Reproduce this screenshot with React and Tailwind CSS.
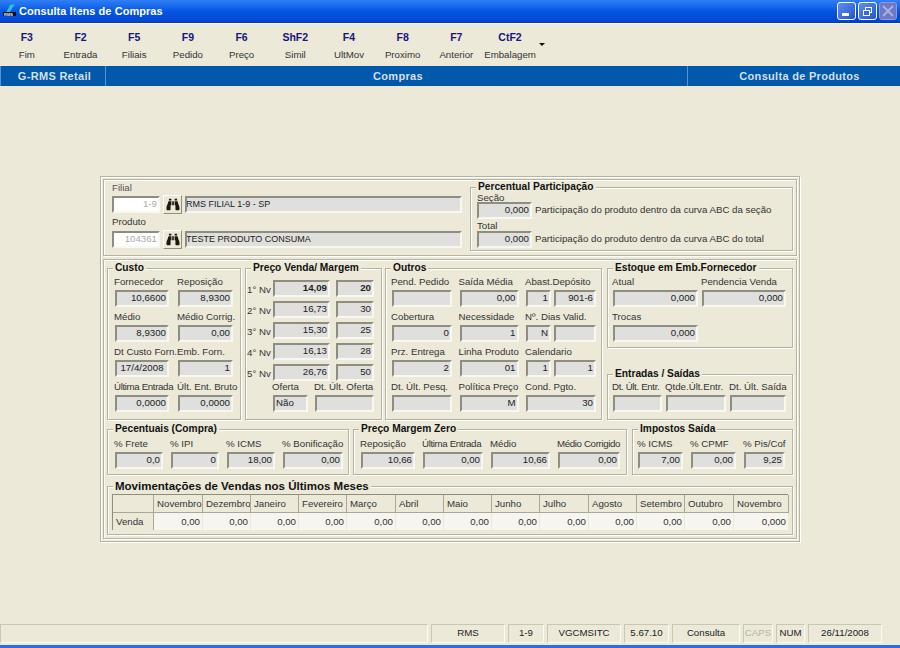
import { FaBinoculars } from 'react-icons/fa';

const tools = [
  ['F3', 'Fim'], ['F2', 'Entrada'], ['F5', 'Filiais'], ['F9', 'Pedido'], ['F6', 'Preço'],
  ['ShF2', 'Simil'], ['F4', 'UltMov'], ['F8', 'Proximo'], ['F7', 'Anterior'], ['CtF2', 'Embalagem']
];

const months = ['Novembro', 'Dezembro', 'Janeiro', 'Fevereiro', 'Março', 'Abril', 'Maio', 'Junho', 'Julho', 'Agosto', 'Setembro', 'Outubro', 'Novembro'];

const Box = ({ w = 'w-full', tone = 'bg-[#dfdfdd] text-[#222]', align = 'justify-end', children }) => (
  <div className={`${w} ${tone} ${align} h-[17px] flex items-center px-[1px] border-2 border-t-[#8f8d80] border-l-[#8f8d80] border-b-[#f8f7f2] border-r-[#f8f7f2] whitespace-nowrap overflow-hidden`}>
    {children}
  </div>
);

const Field = ({ label, w = 'w-full', align, tight, children }) => (
  <div className={w}>
    <div className={`${tight ? 'tracking-[-0.35px]' : ''} h-[16px] leading-[16px] -ml-[1px] whitespace-nowrap text-[#333]`}>{label}</div>
    <Box align={align}>{children}</Box>
  </div>
);

const Group = ({ title, className, pad, legend = 'text-[10.2px]', children }) => (
  <fieldset className={`${className} border border-[#b5b3a2] shadow-[1px_1px_0_#fff,inset_1px_1px_0_#fff]`}>
    <legend className={`${legend} ml-[5px] px-[2px] h-[12px] leading-[12px] bg-[#ece9d8] font-bold text-[#111] whitespace-nowrap`}>{title}</legend>
    <div className={pad}>{children}</div>
  </fieldset>
);

const Search = () => (
  <div className="w-[19px] h-[19px] flex items-center justify-center bg-[#ece9d8] border border-t-white border-l-white border-b-[#8f8d80] border-r-[#8f8d80]">
    <FaBinoculars className="w-[14px] h-[13px] text-[#1f170d]" />
  </div>
);

const Nivel = ({ n, price, margin, bold }) => (
  <>
    <div className="self-end h-[14px] leading-[14px] whitespace-nowrap text-[#333]">{n}° Nv</div>
    <Box><span className={bold ? 'font-bold' : ''}>{price}</span></Box>
    <Box><span className={bold ? 'font-bold' : ''}>{margin}</span></Box>
  </>
);

const Pair = ({ label, a, b }) => (
  <div>
    <div className="h-[16px] leading-[16px] text-[#333] -ml-[1px] whitespace-nowrap">{label}</div>
    <div className="flex gap-[3px]">
      <Box w="w-[25px]">{a}</Box>
      <Box w="w-[42px]">{b}</Box>
    </div>
  </div>
);

const StatusCell = ({ w, muted, children }) => (
  <div className={`${w} h-[19px] flex items-center justify-center border border-t-[#c9c6b4] border-l-[#c9c6b4] border-b-[#fbfaf5] border-r-[#fbfaf5] ${muted ? 'text-[#b5b3a8]' : 'text-[#222]'}`}>
    {children}
  </div>
);

const App = () => {
  return (
    <div className="w-[900px] h-[648px] flex flex-col bg-[#ece9d8] text-[9.7px] overflow-hidden" style={{ fontFamily: '"Liberation Sans", Arial, sans-serif' }}>
      {/* Title bar */}
      <div className="h-[23px] flex items-center bg-gradient-to-b from-[#2f7ff5] via-[#0457e4] to-[#0343cf] border-b border-[#0a3ca8]">
        <svg width="16" height="14" viewBox="0 0 16 14" className="ml-[2px]">
          <path d="M8 1 L13 0 L7 9 L4 9 Z" fill="#27c3d8" />
          <rect x="1" y="8" width="13" height="4" fill="#0b1020" />
          <text x="2" y="11.5" fontSize="4" fontWeight="bold" fill="#e8f0ff">RMS</text>
        </svg>
        <div className="ml-[1px] pt-[1px] text-white text-[11px] font-bold tracking-[0.05px]">Consulta Itens de Compras</div>
        <div className="ml-auto mr-[3px] flex gap-[2px]">
          <div className="w-[19px] h-[18px] rounded-[3px] border border-white bg-gradient-to-br from-[#5f8ef0] to-[#2453cf] flex items-end pl-[4px] pb-[3px]">
            <div className="w-[7px] h-[3px] bg-white" />
          </div>
          <div className="w-[19px] h-[18px] rounded-[3px] border border-white bg-gradient-to-br from-[#5f8ef0] to-[#2453cf] flex items-center justify-center">
            <svg width="11" height="11" viewBox="0 0 11 11" fill="none" stroke="#fff">
              <rect x="3.5" y="1.5" width="6" height="5" />
              <rect x="1.5" y="4.5" width="6" height="5" fill="#3a69dc" />
            </svg>
          </div>
          <div className="w-[18px] h-[18px] rounded-[3px] border border-[#8f9bdc] bg-[#6b79c6] flex items-center justify-center">
            <svg width="12" height="12" viewBox="0 0 12 12" stroke="#a9b2de" strokeWidth="2">
              <path d="M1 1 L11 11 M11 1 L1 11" />
            </svg>
          </div>
        </div>
      </div>

      {/* Toolbar */}
      <div className="h-[43px] flex items-start border-t border-[#f7f6ef]">
        {tools.map(([key, label], index) => (
          <div key={index} className="w-[53.7px] pt-[7px] flex flex-col items-center">
            <div className="h-[12px] leading-[12px] font-bold text-[#16167a] text-[10.5px]">{key}</div>
            <div className="mt-[6px] h-[12px] leading-[12px] text-[#333]">{label}</div>
          </div>
        ))}
        <svg width="6" height="3" viewBox="0 0 6 3" className="mt-[19px] ml-[2px]">
          <path d="M0 0 H6 L3 3 Z" fill="#111" />
        </svg>
      </div>

      {/* Module bar */}
      <div className="h-[20px] flex bg-[#0059ab] text-[#d7dfe9] text-[11px] font-bold tracking-[0.3px] leading-[20px] text-center">
        <div className="w-[106px] pl-[3px] border-x border-[#5c93cc]">G-RMS Retail</div>
        <div className="w-[581px] pl-[3px]">Compras</div>
        <div className="w-[213px] border-l border-[#5c93cc] pl-[11px]">Consulta de Produtos</div>
      </div>

      {/* Main panel */}
      <div className="flex-1 pt-[90px]">
        <div className="w-[700px] h-[366px] mx-auto p-[2px] border border-[#b5b3a2] shadow-[1px_1px_0_#fff,inset_1px_1px_0_#fff] flex flex-col gap-[3px]">
          <div className="h-[77px] flex border border-[#b5b3a2] shadow-[1px_1px_0_#fff,inset_1px_1px_0_#fff]">
            <div className="w-[366px] pl-[8px] pt-[1px]">
              <div className="h-[14px] leading-[14px] text-[#555]">Filial</div>
              <div className="flex items-center gap-[3px]">
                <Box w="w-[48px]" tone="bg-white text-[#aaa]">1-9</Box>
                <Search />
                <Box w="w-[277px]" align="justify-start"><span className="-ml-[2px] text-[9px]">RMS FILIAL 1-9 - SP</span></Box>
              </div>
              <div className="h-[16px] leading-[16px] text-[#333]">Produto</div>
              <div className="flex items-center gap-[3px]">
                <Box w="w-[48px]" tone="bg-white text-[#aaa]">104361</Box>
                <Search />
                <Box w="w-[277px]" align="justify-start"><span className="-ml-[2px] text-[9px]">TESTE PRODUTO CONSUMA</span></Box>
              </div>
            </div>
            <Group title="Percentual Participação" className="w-[323px] h-[70px] mt-[1px]" pad="pl-[6px]">
              <div className="h-[9px] leading-[9px] text-[#333]">Seção</div>
              <div className="flex items-center gap-[3px]">
                <Box w="w-[55px]">0,000</Box>
                <span className="text-[#333]">Participação do produto dentro da curva ABC da seção</span>
              </div>
              <div className="mt-[1px] h-[11px] leading-[11px] text-[#333]">Total</div>
              <div className="flex items-center gap-[3px]">
                <Box w="w-[55px]">0,000</Box>
                <span className="text-[#333]">Participação do produto dentro da curva ABC do total</span>
              </div>
            </Group>
          </div>

          <div className="h-[280px] pl-[3px] pt-[2px] border border-[#b5b3a2] shadow-[1px_1px_0_#fff,inset_1px_1px_0_#fff]">
            <div className="flex h-[158px]">
              <Group title="Custo" className="w-[134px] h-[158px]" pad="pl-[7px]">
                <div className="grid grid-cols-[54px_55px] gap-x-[9px] gap-y-[2px]">
                  <Field label="Fornecedor">10,6600</Field>
                  <Field label="Reposição">8,9300</Field>
                  <Field label="Médio">8,9300</Field>
                  <Field label="Médio Corrig.">0,00</Field>
                  <Field label="Dt Custo Forn." align="justify-center">17/4/2008</Field>
                  <Field label="Emb. Forn.">1</Field>
                  <Field label="Última Entrada" tight>0,0000</Field>
                  <Field label="Últ. Ent. Bruto">0,0000</Field>
                </div>
              </Group>
              <Group title="Preço Venda/ Margem" className="ml-[4px] w-[137px] h-[158px]" pad="pl-[1px] pt-[6px]">
                <div className="grid grid-cols-[20px_57px_38px] gap-x-[6px] gap-y-[4px]">
                  <Nivel n="1" price="14,09" margin="20" bold />
                  <Nivel n="2" price="16,73" margin="30" />
                  <Nivel n="3" price="15,30" margin="25" />
                  <Nivel n="4" price="16,13" margin="28" />
                  <Nivel n="5" price="26,76" margin="50" />
                </div>
                <div className="flex gap-[7px] pl-[26px] -mt-[2px]">
                  <Field label="Oferta" w="w-[35px]" align="justify-start">Não</Field>
                  <Field label="Dt. Últ. Oferta" w="w-[59px]" />
                </div>
              </Group>
              <Group title="Outros" className="ml-[3px] w-[217px] h-[158px]" pad="pl-[6px]">
                <div className="grid grid-cols-[60px_59px_70px] gap-x-[7.5px] gap-y-[2px]">
                  <Field label="Pend. Pedido" />
                  <Field label="Saída Média">0,00</Field>
                  <Pair label="Abast.Depósito" a="1" b="901-6" />
                  <Field label="Cobertura">0</Field>
                  <Field label="Necessidade">1</Field>
                  <Pair label="Nº. Dias Valid." a="N" />
                  <Field label="Prz. Entrega">2</Field>
                  <Field label="Linha Produto">01</Field>
                  <Pair label="Calendario" a="1" b="1" />
                  <Field label="Dt. Últ. Pesq." />
                  <Field label="Política Preço">M</Field>
                  <Field label="Cond. Pgto.">30</Field>
                </div>
              </Group>
              <div className="ml-[5px] w-[186px] flex flex-col">
                <Group title="Estoque em Emb.Fornecedor" className="h-[86px]" pad="pl-[5px]">
                  <div className="grid grid-cols-[85px_84px] gap-x-[4px] gap-y-[2px]">
                    <Field label="Atual">0,000</Field>
                    <Field label="Pendencia Venda">0,000</Field>
                    <Field label="Trocas">0,000</Field>
                  </div>
                </Group>
                <Group title="Entradas / Saídas" className="mt-[20px] h-[52px]" pad="pl-[5px] -mt-[1px]">
                  <div className="flex gap-[4px]">
                    <Field label="Dt. Últ. Entr." w="w-[49px]" tight />
                    <Field label="Qtde.Últ.Entr." w="w-[60px]" />
                    <Field label="Dt. Últ. Saída" w="w-[56px]" />
                  </div>
                </Group>
              </div>
            </div>

            <div className="flex mt-[3px] h-[52px]">
              <Group title="Pecentuais (Compra)" className="w-[242px]" pad="pl-[7px] pt-[1px]">
                <div className="flex gap-[8px]">
                  <Field label="% Frete" w="w-[48px]">0,0</Field>
                  <Field label="% IPI" w="w-[48px]">0</Field>
                  <Field label="% ICMS" w="w-[48px]">18,00</Field>
                  <Field label="% Bonificação" w="w-[60px]">0,00</Field>
                </div>
              </Group>
              <Group title="Preço Margem Zero" className="ml-[4px] w-[274px]" pad="pl-[7px] pt-[1px]">
                <div className="flex gap-[8px]">
                  <Field label="Reposição" w="w-[54px]">10,66</Field>
                  <Field label="Última Entrada" w="w-[60px]" tight>0,00</Field>
                  <Field label="Médio" w="w-[59px]">10,66</Field>
                  <Field label="Médio Corrigido" w="w-[62px]" tight>0,00</Field>
                </div>
              </Group>
              <Group title="Impostos Saída" className="ml-[5px] w-[161px]" pad="pl-[5px] pt-[1px]">
                <div className="flex gap-[8px]">
                  <Field label="% ICMS" w="w-[45px]">7,00</Field>
                  <Field label="% CPMF" w="w-[45px]">0,00</Field>
                  <Field label="% Pis/Cof" w="w-[41px]">9,25</Field>
                </div>
              </Group>
            </div>

            <Group title="Movimentações de Vendas nos Últimos Meses" legend="text-[11.5px]" className="mt-[5px] w-[686px] h-[55px]" pad="pl-[4px] pt-[2px]">
              <div className="w-[676px] grid grid-cols-[41px_49px_48px_48px_48px_49px_48px_48px_48px_49px_48px_48px_49px_55px] border-l border-t border-[#8f8d80]">
                <div className="h-[18px] bg-[#ece9d8] border-r border-b border-[#a9a798]" />
                {months.map((month, index) => (
                  <div key={index} className="h-[18px] leading-[17px] pl-[3px] bg-[#ece9d8] text-[#333] border-r border-b border-[#a9a798] whitespace-nowrap overflow-hidden">{month}</div>
                ))}
                <div className="h-[17px] leading-[17px] pl-[3px] bg-[#ece9d8] text-[#333] border-r border-[#a9a798]">Venda</div>
                {months.map((month, index) => (
                  <div key={index} className="h-[17px] leading-[17px] pr-[2px] text-right bg-[#f6f5ef] text-[#333] border-r border-[#ece9d8]">
                    {index === 12 ? '0,000' : '0,00'}
                  </div>
                ))}
              </div>
            </Group>
          </div>
        </div>
      </div>

      {/* Status bar */}
      <div className="h-[21px] flex gap-[3px] items-start">
        <StatusCell w="w-[428px]" />
        <StatusCell w="w-[74px]">RMS</StatusCell>
        <StatusCell w="w-[36px]">1-9</StatusCell>
        <StatusCell w="w-[74px]">VGCMSITC</StatusCell>
        <StatusCell w="w-[45px]">5.67.10</StatusCell>
        <StatusCell w="w-[68px]">Consulta</StatusCell>
        <StatusCell w="w-[30px]" muted>CAPS</StatusCell>
        <StatusCell w="w-[29px]">NUM</StatusCell>
        <StatusCell w="w-[74px]">26/11/2008</StatusCell>
      </div>
      <div className="h-[3px] bg-[#2a6fe0]" />
    </div>
  );
};

export default App;
